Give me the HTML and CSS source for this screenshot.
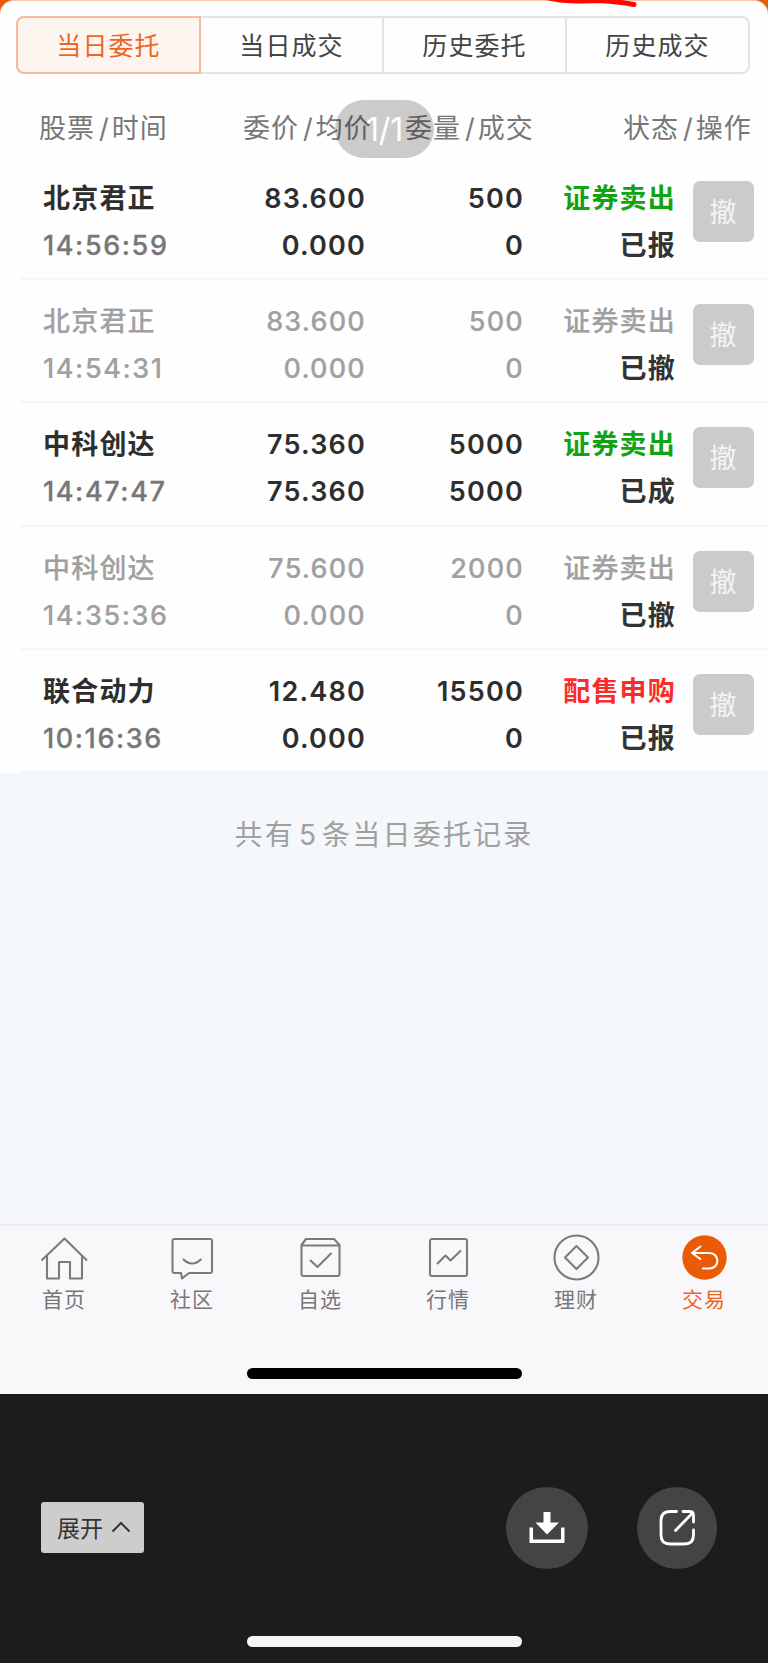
FILE: index.html
```
<!DOCTYPE html>
<html lang="zh-CN">
	<head>
		<meta charset="UTF-8" />
		<meta name="viewport" content="width=device-width, initial-scale=1.0" />
		<title>当日委托</title>
		<link rel="stylesheet" href="styles.css">
	</head>
	<body>
		<div class="screen">
			<svg class="scribble" width="92" height="10" viewBox="0 0 92 10">
				<path d="M2-2C20 2 32 1 50 0.5C62 1 74 2 87 4.5" fill="none" stroke="#ff0800" stroke-width="5" stroke-linecap="round" />
			</svg>
			<div class="counter">1/1</div>

			<main class="card">
				<div class="tabs">
					<div class="tab active">当日委托</div>
					<div class="tab">当日成交</div>
					<div class="tab">历史委托</div>
					<div class="tab">历史成交</div>
				</div>

				<div class="head">
					<span>股票<i>/</i>时间</span>
					<span>委价<i>/</i>均价</span>
					<span>委量<i>/</i>成交</span>
					<span>状态<i>/</i>操作</span>
				</div>

				<div class="order">
					<div class="cell"><b>北京君正</b><span class="time">14:56:59</span></div>
					<div class="cell num"><b>83.600</b><b>0.000</b></div>
					<div class="cell num"><b>500</b><b>0</b></div>
					<div class="cell num"><b class="sell">证券卖出</b><b class="state">已报</b></div>
					<div class="cancel">撤</div>
				</div>
				<div class="order revoked">
					<div class="cell"><b>北京君正</b><span class="time">14:54:31</span></div>
					<div class="cell num"><b>83.600</b><b>0.000</b></div>
					<div class="cell num"><b>500</b><b>0</b></div>
					<div class="cell num"><b class="sell">证券卖出</b><b class="state">已撤</b></div>
					<div class="cancel">撤</div>
				</div>
				<div class="order">
					<div class="cell"><b>中科创达</b><span class="time">14:47:47</span></div>
					<div class="cell num"><b>75.360</b><b>75.360</b></div>
					<div class="cell num"><b>5000</b><b>5000</b></div>
					<div class="cell num"><b class="sell">证券卖出</b><b class="state">已成</b></div>
					<div class="cancel">撤</div>
				</div>
				<div class="order revoked">
					<div class="cell"><b>中科创达</b><span class="time">14:35:36</span></div>
					<div class="cell num"><b>75.600</b><b>0.000</b></div>
					<div class="cell num"><b>2000</b><b>0</b></div>
					<div class="cell num"><b class="sell">证券卖出</b><b class="state">已撤</b></div>
					<div class="cancel">撤</div>
				</div>
				<div class="order">
					<div class="cell"><b>联合动力</b><span class="time">10:16:36</span></div>
					<div class="cell num"><b>12.480</b><b>0.000</b></div>
					<div class="cell num"><b>15500</b><b>0</b></div>
					<div class="cell num"><b class="buy">配售申购</b><b class="state">已报</b></div>
					<div class="cancel">撤</div>
				</div>
			</main>

			<p class="summary">共有<i>5</i>条当日委托记录</p>

			<nav class="tabbar">
				<a class="item">
					<svg class="icon" viewBox="0 0 48 48">
						<path d="M1.500 26.500L24.500 4.500L47 26.500M7 22V44.500H19V28H30V44.500H42V22" />
					</svg>
					<span>首页</span>
				</a>
				<a class="item">
					<svg class="icon" viewBox="0 0 48 48">
						<path d="M6.500 5H42Q44 5 44 7V37Q44 39 42 39H21L14 44.500L13 39H6.500Q4.500 39 4.500 37V7Q4.500 5 6.500 5M15 25Q24 34 33.500 25" />
					</svg>
					<span>社区</span>
				</a>
				<a class="item">
					<svg class="icon" viewBox="0 0 48 48">
						<path d="M10 5H38L43.500 11V40Q43.500 42 41.500 42H7.500Q5.500 42 5.500 40V11ZM5.500 11.500H43.500M14 26L21.500 33L35.500 19" />
					</svg>
					<span>自选</span>
				</a>
				<a class="item">
					<svg class="icon" viewBox="0 0 48 48">
						<rect x="6" y="5" width="37" height="37" rx="2" />
						<path d="M13 30L21.500 21.500L26.500 26.500L37 16.500" />
					</svg>
					<span>行情</span>
				</a>
				<a class="item">
					<svg class="icon" viewBox="0 0 48 48">
						<circle cx="24.500" cy="23.500" r="22" />
						<path d="M24.500 12L36 23.500L24.500 35L13 23.500Z" />
					</svg>
					<span>理财</span>
				</a>
				<a class="item current">
					<svg class="icon" viewBox="0 0 48 48">
						<circle class="disc" cx="24.500" cy="23.500" r="22.200" />
						<path d="M21 12L12 19L21 25.500M12.500 19H29.500C40 19 40 34.500 29.500 34.500H22" />
					</svg>
					<span>交易</span>
				</a>
			</nav>
			<div class="home">
				<div class="home-bar"></div>
			</div>
		</div>

		<footer class="viewer">
			<div class="actions">
				<button class="expand">
					展开
					<svg width="20" height="12" viewBox="0 0 20 12"><path d="M1.500 10.500L10 2L18.500 10.500" fill="none" stroke="#333" stroke-width="2" /></svg>
				</button>
				<button class="round">
					<svg width="36" height="36" viewBox="0 0 36 36" fill="#fff">
						<path d="M14.500 2H21.500V12.500H30L18 24.500L6.500 12.500H14.500ZM.5 17.500H4V29.500H32V17.500H35.500V33H.5Z" />
					</svg>
				</button>
				<button class="round share">
					<svg width="36" height="36" viewBox="0 0 36 36" fill="none" stroke="#fff" stroke-width="2.800" stroke-linecap="round" stroke-linejoin="round">
						<path d="M17.500 1.500H11Q2 1.500 2 10.500V25Q2 34 11 34H25.500Q34.500 34 34.500 25V20M24 1.500H30.500Q34.500 1.500 34.500 5.500V12M33 3.500L16.500 20.500" />
					</svg>
				</button>
			</div>
			<div class="home-bar light"></div>
		</footer>
	</body>
</html>
```

FILE: styles.css
```
* {
	box-sizing: border-box;
}
body {
	margin: 0;
	background-color: #1c1c1c;
	font-family: Inter, "Noto Sans CJK SC", sans-serif;
}
i {
	font-style: normal;
}
.screen {
	position: relative;
	display: flex;
	flex-direction: column;
	height: 1394px;
	background-color: #f4f8fa;
	background-image: linear-gradient(#eb5a0a, #eb5a0a);
	background-size: 100% 20px;
	background-repeat: no-repeat;
	overflow: hidden;
}
.scribble {
	position: absolute;
	top: 0;
	left: 547px;
}
.counter {
	position: absolute;
	top: 100px;
	left: 335px;
	width: 99px;
	height: 58px;
	border-radius: 29px;
	background-color: rgba(0, 0, 0, 0.2);
	color: #fff;
	font-size: 32px;
	font-weight: 400;
	letter-spacing: -0.2px;
	line-height: 59px;
	text-align: center;
}

.card {
	height: 773px;
	padding-top: 15px;
	border-top: 1px solid #f9c4a8;
	border-radius: 14px 14px 0 0;
	background-color: #fefefe;
}
.tabs {
	display: flex;
	height: 58px;
	margin: 0 18px 0 16px;
	border: 2px solid #e1e4e8;
	border-radius: 8px;
}
.tab {
	flex: 1;
	border-right: 2px solid #e1e4e8;
	color: #444;
	font-size: 25px;
	letter-spacing: 1.1px;
	line-height: 57px;
	text-align: center;
}
.tab:last-child {
	border-right: none;
}
.tab.active {
	margin: -2px 0 -2px -2px;
	border: 2px solid #f5bb9e;
	border-radius: 8px 0 0 8px;
	background-color: #fef5f1;
	color: #f0651c;
}

.head {
	display: grid;
	grid-template-columns: 204px 162px 218px 1fr;
	height: 83px;
	padding-left: 39px;
	color: #777;
	font-size: 27px;
	letter-spacing: 1px;
	line-height: 109px;
	white-space: nowrap;
}
.head i {
	margin: 0 2px 0 4px;
}

.order {
	display: grid;
	grid-template-columns: 176px 147px 158px 152px 61px;
	height: 123.2px;
	margin-left: 20px;
	padding: 18px 0 0 23px;
	border-bottom: 2px solid #f6f6f7;
	color: #2e2e2e;
	font-size: 27px;
	letter-spacing: 1.2px;
}
.cell {
	display: flex;
	flex-direction: column;
	line-height: 47px;
}
.cell b {
	font-weight: 600;
}
.num {
	align-items: flex-end;
}
.time {
	color: #777;
	font-weight: 500;
	letter-spacing: 1.6px;
	-webkit-text-stroke: 0.3px;
}
.sell {
	color: #12a312;
}
.buy {
	color: #fb2b2b;
}
.state {
	color: #333;
}
.revoked b:not(.state),
.revoked .time {
	color: #a0a0a0;
	font-weight: 500;
	-webkit-text-stroke: 0.2px;
}
.cancel {
	height: 61px;
	margin: 6px -17px 0 17px;
	border-radius: 7px;
	background-color: #cbcbcb;
	color: #f4f4f4;
	line-height: 63px;
	text-align: center;
}

.summary {
	margin: 39px 0 0;
	color: #a0a0a0;
	font-size: 28px;
	letter-spacing: 2.2px;
	line-height: 46px;
	text-align: center;
}
.summary i {
	margin: 0 4px;
}

.tabbar {
	display: flex;
	height: 144px;
	margin-top: auto;
	padding-top: 8px;
	border-top: 2px solid #ebecee;
	background-color: #f8f8fb;
}
.item {
	flex: 1;
	display: flex;
	flex-direction: column;
	align-items: center;
	color: #777;
	font-size: 21px;
	letter-spacing: 1px;
	line-height: 36px;
}
.icon {
	width: 48px;
	height: 48px;
	fill: none;
	stroke: #7b7b7b;
	stroke-width: 2.1;
	stroke-linejoin: round;
}
.current {
	color: #ee641c;
}
.current .icon {
	stroke: #fff;
}
.current .disc {
	fill: #eb5a05;
	stroke: none;
}
.home {
	height: 26px;
	background-color: #f8f8fb;
}
.home-bar {
	width: 275px;
	height: 11px;
	margin-left: 247px;
	border-radius: 6px;
	background-color: #000;
}

.viewer {
	height: 269px;
	padding-top: 92px;
}
.actions {
	display: flex;
	align-items: center;
	height: 83px;
	margin-bottom: 67px;
	padding: 0 51px 0 41px;
}
button {
	display: flex;
	align-items: center;
	justify-content: center;
	padding: 0;
	border: none;
	font-family: inherit;
}
.expand {
	width: 103px;
	height: 51px;
	margin-right: auto;
	padding: 0 0 2px 3px;
	gap: 8px;
	border-radius: 3px;
	background-color: #cdcdcd;
	color: #333;
	font-size: 23px;
}
.round {
	width: 82px;
	height: 82px;
	border-radius: 50%;
	background-color: #444;
}
.share {
	width: 80px;
	margin-left: 49px;
}
.light {
	background-color: #f5f5f5;
}
```
